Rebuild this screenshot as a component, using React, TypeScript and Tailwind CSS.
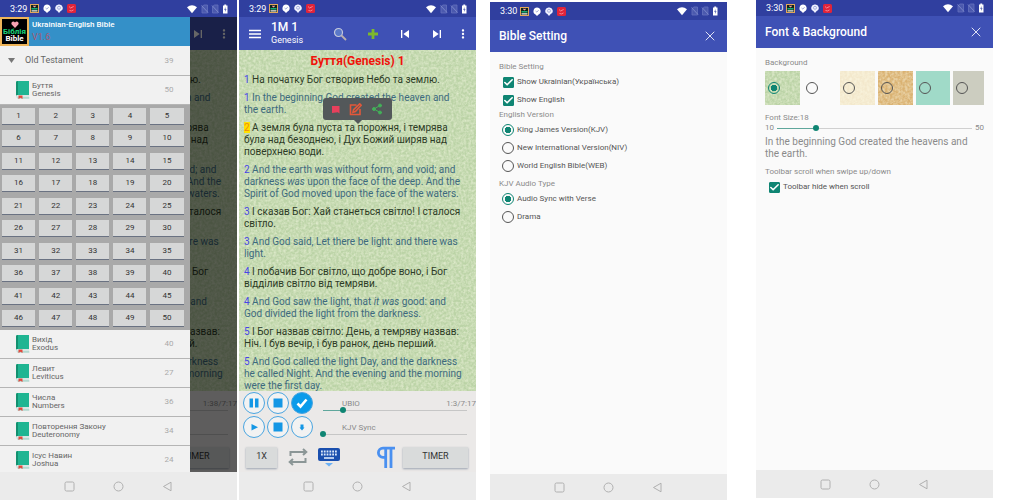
import React, { useId, useState } from 'react';
import { Share2, X, Check } from 'lucide-react';
import { MdSkipNext, MdSkipPrevious, MdMoreVert } from 'react-icons/md';

const VERSES = [
  { no: 1, uk: 'На початку Бог створив Небо та землю.', en: <>In the beginning God created the heaven and the earth.</> },
  {
    no: 2,
    uk: 'А земля була пуста та порожня, і темрява була над безоднею, і Дух Божий ширяв над поверхнею води.',
    en: <>And the earth was without form, and void; and darkness <i>was</i> upon the face of the deep. And the Spirit of God moved upon the face of the waters.</>,
  },
  { no: 3, uk: 'І сказав Бог: Хай станеться світло! І сталося світло.', en: <>And God said, Let there be light: and there was light.</> },
  {
    no: 4,
    uk: 'І побачив Бог світло, що добре воно, і Бог відділив світло від темряви.',
    en: <>And God saw the light, that <i>it was</i> good: and God divided the light from the darkness.</>,
  },
  {
    no: 5,
    uk: 'І Бог назвав світло: День, а темряву назвав: Ніч. І був вечір, і був ранок, день перший.',
    en: <>And God called the light Day, and the darkness he called Night. And the evening and the morning were the first day.</>,
  },
];

const BOOKS = [
  { uk: 'Вихід', en: 'Exodus', chapters: 40 },
  { uk: 'Левит', en: 'Leviticus', chapters: 27 },
  { uk: 'Числа', en: 'Numbers', chapters: 36 },
  { uk: 'Повторення Закону', en: 'Deuteronomy', chapters: 34 },
  { uk: 'Ісус Навин', en: 'Joshua', chapters: 24 },
];

const SWATCHES = [
  { name: 'Green paper', color: 'bg-[#bbd3a6]', grain: true },
  { name: 'White', color: 'bg-transparent', grain: false },
  { name: 'Cream paper', color: 'bg-[#f3e8cc]', grain: true },
  { name: 'Brown paper', color: 'bg-[#dab272]', grain: true },
  { name: 'Mint', color: 'bg-[#a0dac8]', grain: false },
  { name: 'Grey', color: 'bg-[#cccdc0]', grain: false },
];

// Paper grain laid over a flat colour
function Grain() {
  const id = useId();
  return (
    <svg className="absolute inset-0 h-full w-full" aria-hidden="true">
      <filter id={id}>
        <feTurbulence type="fractalNoise" baseFrequency="0.4" numOctaves="2" seed="4" />
        <feColorMatrix values="0 0 0 0 1  0 0 0 0 1  0 0 0 0 0.85  0.9 0 0 0 -0.27" />
      </filter>
      <rect width="100%" height="100%" filter={`url(#${id})`} />
    </svg>
  );
}

function StatusBar({ time, className }: { time: string; className: string }) {
  return (
    <div className={`flex shrink-0 items-center bg-[#303f9f] pr-[9px] pl-[10px] text-white ${className}`}>
      <span className="text-[9px] leading-3">{time}</span>
      <svg className="ml-[3px] h-[9px] w-[46px]" viewBox="0 0 46 9" aria-hidden="true">
        <rect width="9" height="9" fill="#e2a75a" />
        <rect x="1" y="1" width="7" height="7" fill="#10241c" />
        <path d="M4.5 3.6 3 2.2Q3.7 1 4.5 1.9 5.3 1 6 2.2Z" fill="#f6a0a8" />
        <path d="M1.5 4.8h6" stroke="#19c486" strokeWidth="1.3" />
        <path d="M1.5 6.9h6" stroke="#fff" strokeWidth="1.2" />
        <path d="M17 .5a3.700 3.700 0 0 1 1.600 7L17 9l-1.500-1.500A3.700 3.700 0 0 1 17 .5Z" fill="#fff" />
        <path d="m15.600 4 1.200 1.100 1.800-1.900" fill="none" stroke="#8590cc" strokeWidth=".8" />
        <path d="M29 .5a3.400 3.400 0 0 1 1.700 6.500L29 9l-1.700-2A3.400 3.400 0 0 1 29 .5Z" fill="#eef0ff" />
        <circle cx="29" cy="3.800" r="1.500" fill="none" stroke="#8d97d0" strokeWidth=".7" />
        <rect x="37" width="9" height="9" rx="1.500" fill="#e0243a" />
        <path d="M39 2.500 40.600 4 43.600 2.500M39.500 6.500q2 1.200 4-.6" fill="none" stroke="#ffa0aa" strokeWidth=".8" />
      </svg>
      <svg className="ml-auto h-[10px] w-[41px]" viewBox="0 0 41 10" aria-hidden="true">
        <path d="M0 3.300Q5 -.9 10 3.300L5 9.200Z" fill="#fff" />
        <path d="M15 2.500 17 1h3.500v8H15ZM25.500 2.500l2-1.500H31v8h-5.500Z" fill="#4b59ae" stroke="#6472be" strokeWidth=".8" />
        <path d="m14.500 1.500 6.500 7M25 1.500l6.500 7" stroke="#8590cf" strokeWidth=".8" />
        <path d="M36 1.500h1.300V.5h1.900v1h1.300v8H36Z" fill="#fff" />
        <path d="M38.700 3 37.200 5.700h1.200L38 8l1.500-2.800h-1.200Z" fill="#303f9f" />
      </svg>
    </div>
  );
}

function NavBar({ className }: { className: string }) {
  return (
    <nav className={`flex shrink-0 items-center justify-center gap-[38px] bg-[#ebebeb] ${className}`}>
      <button aria-label="Recent apps">
        <svg className="h-[11px] w-[11px]" viewBox="0 0 11 11" fill="none" stroke="#b0b0b0">
          <rect x="1" y="1" width="9" height="9" rx="1.500" />
        </svg>
      </button>
      <button aria-label="Home">
        <svg className="h-[11px] w-[11px]" viewBox="0 0 11 11" fill="none" stroke="#b0b0b0">
          <circle cx="5.500" cy="5.500" r="4.500" />
        </svg>
      </button>
      <button aria-label="Back">
        <svg className="h-[11px] w-[11px]" viewBox="0 0 11 11" fill="none" stroke="#b0b0b0" strokeLinejoin="round">
          <path d="M1.500 5.500 9 1.200v8.600Z" />
        </svg>
      </button>
    </nav>
  );
}

type SeekProps = { id: string; label?: string; min?: number; max?: number; start: number; track: string };

function Seek({ id, label, min = 0, max = 100, start, track }: SeekProps) {
  const [value, setValue] = useState(start);
  const pct = ((value - min) / (max - min)) * 100;
  return (
    <div className="relative flex h-[6px] min-w-0 flex-1 items-center">
      <div className={`absolute inset-x-[3px] h-px ${track}`}>
        <div className="h-px bg-[#5fa79c]" style={{ width: `${pct}%` }} />
      </div>
      <input
        id={id}
        type="range"
        aria-label={label}
        min={min}
        max={max}
        value={value}
        onChange={(e) => setValue(Number(e.target.value))}
        className="relative block h-[6px] w-full appearance-none bg-transparent [&::-webkit-slider-thumb]:h-[6px] [&::-webkit-slider-thumb]:w-[6px] [&::-webkit-slider-thumb]:appearance-none [&::-webkit-slider-thumb]:rounded-full [&::-webkit-slider-thumb]:bg-[#0f8573]"
      />
    </div>
  );
}

function RoundButton({ label, filled, children }: { label: string; filled?: boolean; children: React.ReactNode }) {
  return (
    <button
      aria-label={label}
      className={`flex h-[22px] w-[22px] items-center justify-center rounded-full border border-[#4aa5e0] ${filled ? 'bg-[#0a9bea]' : 'bg-[#f2f2f2]'}`}
    >
      <svg className="h-[14px] w-[14px]" viewBox="0 0 14 14" fill="#1497e5">
        {children}
      </svg>
    </button>
  );
}

function Player({ id, position, progress }: { id: string; position: string; progress: number }) {
  const rows = [
    { name: 'UBIO', value: progress, time: position },
    { name: 'KJV Sync', value: 0, time: '' },
  ];
  return (
    <div className="h-[81px] shrink-0 bg-[#ebe9e8] pt-px">
      {rows.map((row, i) => (
        <div key={row.name} className="flex h-6 items-start pl-1">
          <div className="flex gap-[2px]">
            {i === 0 ? (
              <RoundButton label="Pause">
                <path d="M2.500 2.500h3.500v9H2.500zM8 2.500h3.500v9H8z" />
              </RoundButton>
            ) : (
              <RoundButton label="Play">
                <path d="M4.500 4v6.500L11 7.200Z" />
              </RoundButton>
            )}
            <RoundButton label="Stop">
              <path d="M2.500 2.500h9v9h-9z" />
            </RoundButton>
            {i === 0 ? (
              <RoundButton label="Sync with text" filled>
                <path d="m2.500 7.500 3 3 6-7" fill="none" stroke="#fff" strokeWidth="2.600" />
              </RoundButton>
            ) : (
              <RoundButton label="Download">
                <path d="M5.500 4.500h3v3h1L7 10.500 4.500 7.500h1Z" />
              </RoundButton>
            )}
          </div>
          <div className="min-w-0 flex-1 pt-[6px] pl-[7px] text-[8px] leading-3 text-[#8a8a8a]">
            <div className="flex h-3 justify-between pl-[22px]">
              <label htmlFor={`${id}-${i}`}>{row.name}</label>
              <span>{row.time}</span>
            </div>
            <div className="-mt-[3px] flex pr-[6px]">
              <Seek id={`${id}-${i}`} start={row.value} track="bg-[#c6c6c6]" />
            </div>
          </div>
        </div>
      ))}
      <div className="flex items-center pt-[6px] pr-2 pl-[7px] text-[9px] text-[#333]">
        <button className="h-[21px] w-[31px] bg-[#d9dbdb] shadow-xs shadow-gray-400">1X</button>
        <button aria-label="Repeat" className="ml-[11px]">
          <svg className="h-[20px] w-[20px]" viewBox="0 0 20 20" fill="none" stroke="#8b9696" strokeWidth="2">
            <path d="M2.500 9V5H18M15 2l3.300 3L15 8M17.500 11v4H2M5 12l-3.300 3L5 18" />
          </svg>
        </button>
        <button aria-label="Keyboard" className="ml-[9px]">
          <svg className="h-[20px] w-[24px]" viewBox="0 0 24 20">
            <rect x="1" y="1" width="22" height="13" rx="2" fill="#1a4fae" />
            <path d="M4 4.500h16M4 7.500h16" stroke="#dce8fa" strokeWidth="1.800" strokeDasharray="1.800 1" />
            <path d="M7 11h10" stroke="#dce8fa" strokeWidth="1.600" />
            <path d="M8 16h8l-4 3.500Z" fill="#6bb0f5" />
          </svg>
        </button>
        <button aria-label="Paragraph mode" className="ml-auto">
          <svg className="h-[22px] w-[20px]" viewBox="0 0 20 22" fill="none" stroke="#4a90f0" strokeWidth="2.800">
            <path d="M19 2.200H7a4.600 4.600 0 0 0 0 9.200H9.500M9.700 2v20M15 2v20" />
          </svg>
        </button>
        <button className="ml-[7px] h-[21px] w-[65px] bg-[#d9dbdb] shadow-xs shadow-gray-400">TIMER</button>
      </div>
    </div>
  );
}

function Reader({ id, position, progress, popup }: { id: string; position: string; progress: number; popup?: boolean }) {
  return (
    <div className="flex min-h-0 flex-1 flex-col">
      <header className="flex h-[33px] shrink-0 items-center bg-[#3f51b5] pr-[6px] pl-[10px] text-white">
        <button aria-label="Menu">
          <svg className="h-[10px] w-[12px]" viewBox="0 0 12 10" stroke="#fff" strokeWidth="1.600">
            <path d="M0 1.500h12M0 5h12M0 8.500h12" />
          </svg>
        </button>
        <div className="ml-[10px] flex-1">
          <h1 className="text-[12px] leading-[14px] font-medium">1M 1</h1>
          <p className="text-[9px] leading-[13px]">Genesis</p>
        </div>
        <div className="flex items-center">
          <button aria-label="Search" className="mr-[20px]">
            <svg className="h-[14px] w-[14px]" viewBox="0 0 14 14" fill="none">
              <circle cx="5.500" cy="5.500" r="4" fill="#5a78c8" stroke="#c5c9dc" strokeWidth="1.200" />
              <path d="m8.500 8.500 4.500 4.500" stroke="#b9b0ae" strokeWidth="1.800" />
            </svg>
          </button>
          <button aria-label="Add" className="mr-[18px]">
            <svg className="h-[12px] w-[12px]" viewBox="0 0 12 12" stroke="#7db82c" strokeWidth="2.800">
              <path d="M6 1v10M1 6h10" />
            </svg>
          </button>
          <button aria-label="Previous chapter" className="mr-[16px]"><MdSkipPrevious className="h-4 w-4" /></button>
          <button aria-label="Next chapter" className="mr-[11px]"><MdSkipNext className="h-4 w-4" /></button>
          <button aria-label="More"><MdMoreVert className="h-[14px] w-[14px]" /></button>
        </div>
      </header>
      <main className="relative min-h-0 flex-1 overflow-hidden bg-[#bbd3a6]">
        <Grain />
        <div className="relative pt-1 text-[10px] leading-3 text-[#2d3b26]">
          <h2 className="mb-[6px] text-center text-[12px] leading-[14px] font-bold text-[#f0130b]">Буття(Genesis) 1</h2>
          <div className="flex flex-col gap-[6px] pr-[12px] pl-[5px]">
            {VERSES.map((v) => (
              <React.Fragment key={v.no}>
                <p>
                  <span className={v.no === 2 ? 'bg-[#ffe100] text-[#f08a10]' : 'text-[#4646e6]'}>{v.no}</span> {v.uk}
                </p>
                <p className="text-[#3d6a7e]">
                  <span className="text-[#4646e6]">{v.no}</span> {v.en}
                </p>
              </React.Fragment>
            ))}
          </div>
        </div>
        {popup && (
          <div className="absolute top-[48px] left-[84px] flex h-[22px] w-[69px] items-center justify-around rounded-[3px] bg-[#53585a] px-1">
            <button aria-label="Bookmark">
              <svg className="h-[9px] w-[8px]" viewBox="0 0 8 9" fill="#e8405c"><path d="M0 1h7.500v7.500L5.800 7.300 0 8Z" /></svg>
            </button>
            <button aria-label="Note">
              <svg className="h-[13px] w-[13px]" viewBox="0 0 13 13" fill="none" stroke="#e2583a" strokeWidth="1.600">
                <path d="M7.500 2H1.500v9.500h9.500V6M4 9.300l.6-2.600L10.700.8l1.500 1.500-5.800 6.200Z" />
              </svg>
            </button>
            <button aria-label="Share"><Share2 className="h-[12px] w-[12px] fill-[#43b058] text-[#43b058]" /></button>
            <svg className="absolute top-full left-[31px] h-1 w-2" viewBox="0 0 8 4"><path d="M0 0h8L4 4Z" fill="#53585a" /></svg>
          </div>
        )}
      </main>
      <Player id={id} position={position} progress={progress} />
    </div>
  );
}

function BookRow({ uk, en, chapters }: { uk: string; en: string; chapters: number }) {
  return (
    <button className="flex h-[29px] w-full shrink-0 items-center border-b border-[#b5b5b5] pr-[16px] pl-[15px] text-left text-[8px] leading-[8px] text-[#666]">
      <svg className="mr-[2px] h-[18px] w-[15px]" viewBox="0 0 15 18" aria-hidden="true">
        <path d="M2 0h12v14H2Q1 14 1 16V2Q1 0 2 0Z" fill="#1fb592" />
        <path d="M1 1.500Q1 0 3 0v14Q1 14 1 15.500Z" fill="#13906f" />
        <path d="M2 14h12v3H2.500Q1 17 1 15.500 1 14 2 14Z" fill="#d7e6e4" />
        <path d="M14.300 17H2.500" stroke="#7cc4b4" strokeWidth=".8" />
        <path d="M3.500 14.500h4V18l-2-1.200-2 1.200Z" fill="#e2493d" />
      </svg>
      <span className="flex-1">
        <span className="block">{uk}</span>
        <span className="block">{en}</span>
      </span>
      <span className="text-[#aaa]">{chapters}</span>
    </button>
  );
}

function Drawer() {
  const chapters = Array.from({ length: 50 }, (_, i) => i + 1);
  return (
    <aside className="absolute inset-y-0 left-0 flex w-4/5 flex-col overflow-hidden bg-[#f1f1f1]">
      <div className="flex h-[29px] shrink-0 bg-[#3490c8]">
        <div className="flex w-[29px] flex-col items-center justify-center border-2 border-[#efb55a] bg-black text-[8px] leading-[7px] font-bold">
          <svg className="h-[7px] w-[8px]" viewBox="0 0 8 7" aria-hidden="true">
            <path d="M4 7 .7 3.500C-.6 1.500 2.400-.8 4 1.500 5.600-.8 8.600 1.500 7.300 3.500Z" fill="#f9a3b4" />
          </svg>
          <span className="text-[#19d27a]">Біблія</span>
          <span className="text-white">Bible</span>
        </div>
        <div className="pl-[3px] text-[8px] leading-3">
          <p className="pt-[2px] font-medium text-white">Ukrainian-English Bible</p>
          <p className="text-[9px] text-[#a85a70]">V1.6</p>
        </div>
      </div>
      <button className="flex h-[30px] w-full shrink-0 items-center border-b border-[#b5b5b5] pr-[16px] pl-2 text-left text-[#666]">
        <svg className="h-[5px] w-[7px]" viewBox="0 0 7 5" aria-hidden="true"><path d="M0 0h7L3.500 5Z" fill="#777" /></svg>
        <span className="ml-[10px] flex-1 text-[9px]">Old Testament</span>
        <span className="text-[8px] text-[#aaa]">39</span>
      </button>
      <BookRow uk="Буття" en="Genesis" chapters={50} />
      <div className="grid h-[225px] shrink-0 grid-cols-5 content-between gap-x-1 bg-[#a9a9a9] pt-[3px] pr-[6px] pb-1 pl-[2px]">
        {chapters.map((c) => (
          <button key={c} className="h-4 bg-[#d6d7d7] text-[8px] leading-4 text-[#333] shadow-2xs shadow-gray-500">{c}</button>
        ))}
      </div>
      {BOOKS.map((b) => (
        <BookRow key={b.en} {...b} />
      ))}
    </aside>
  );
}

function PageHeader({ title }: { title: string }) {
  return (
    <header className="flex h-[32px] shrink-0 items-center justify-between bg-[#3f51b5] pr-[9px] pl-[9px] text-white">
      <h1 className="text-[12px] leading-4 font-medium">{title}</h1>
      <button aria-label="Close"><X className="h-4 w-4 text-[#dfe2f4]" strokeWidth={1.5} /></button>
    </header>
  );
}

function CheckRow({ label }: { label: string }) {
  return (
    <label className="flex h-[18px] items-center gap-[3px] pl-1 text-[8px] text-[#555]">
      <span className="relative flex h-[11px] w-[11px]">
        <input type="checkbox" defaultChecked className="peer h-[11px] w-[11px] appearance-none rounded-[1px] border border-[#666] checked:border-[#0f8573] checked:bg-[#0f8573]" />
        <Check className="pointer-events-none absolute inset-0 hidden h-[11px] w-[11px] text-white peer-checked:block" strokeWidth={3.5} />
      </span>
      {label}
    </label>
  );
}

const RADIO =
  'block h-[12px] w-[12px] shrink-0 appearance-none rounded-full border border-[#555] checked:border-[#0f8573] checked:bg-[radial-gradient(circle,#0f8573_0_3px,transparent_3px)]';

function RadioRow({ name, label, checked }: { name: string; label: string; checked?: boolean }) {
  return (
    <label className="flex h-[18px] items-center gap-[3px] pl-[3px] text-[8px] text-[#555]">
      <input type="radio" name={name} defaultChecked={checked} className={RADIO} />
      {label}
    </label>
  );
}

function BibleSetting() {
  return (
    <main className="flex-1 bg-[#fafafa] px-[9px] pt-[9px] text-[8px] leading-3 text-[#8a8a8a]">
      <h2>Bible Setting</h2>
      <CheckRow label="Show Ukrainian(Українська)" />
      <CheckRow label="Show English" />
      <h2>English Version</h2>
      <RadioRow name="version" label="King James Version(KJV)" checked />
      <RadioRow name="version" label="New International Version(NIV)" />
      <RadioRow name="version" label="World English Bible(WEB)" />
      <h2 className="mt-[3px]">KJV Audio Type</h2>
      <RadioRow name="audio" label="Audio Sync with Verse" checked />
      <RadioRow name="audio" label="Drama" />
    </main>
  );
}

function FontBackground() {
  return (
    <main className="flex-1 bg-[#fafafa] px-[9px] pt-[9px] text-[8px] leading-3 text-[#8a8a8a]">
      <h2>Background</h2>
      <div className="mt-[2px] grid h-[34px] grid-cols-[repeat(5,35fr)_31fr] gap-[3px]">
        {SWATCHES.map((s, i) => (
          <label key={s.name} className={`relative flex items-center pl-[3px] ${s.color}`}>
            {s.grain && <Grain />}
            <input type="radio" name="background" aria-label={s.name} defaultChecked={i === 0} className={`relative ${RADIO}`} />
          </label>
        ))}
      </div>
      <label htmlFor="font-size" className="mt-[7px] block h-[10px]">Font Size:18</label>
      <div className="flex items-center">
        <span>10</span>
        <Seek id="font-size" min={10} max={50} start={18} track="bg-[#d0d0d0]" />
        <span>50</span>
      </div>
      <p className="pt-[2px] text-[10px] leading-3">In the beginning God created the heavens and the earth.</p>
      <h2 className="mt-[6px]">Toolbar scroll when swipe up/down</h2>
      <CheckRow label="Toolbar hide when scroll" />
    </main>
  );
}

export default function App() {
  return (
    <div className="flex h-screen bg-white pr-[31px] font-[Roboto,sans-serif]">
      <section className="flex min-w-0 flex-1 flex-col overflow-hidden">
        <StatusBar time="3:29" className="h-[17px]" />
        <div className="relative flex min-h-0 flex-1 flex-col">
          <Reader id="drawer-seek" position="1:38/7:17" progress={22} />
          <div className="absolute inset-0 bg-black/60" />
          <Drawer />
        </div>
        <NavBar className="h-7" />
      </section>

      <section className="ml-[2px] flex min-w-0 flex-1 flex-col overflow-hidden">
        <StatusBar time="3:29" className="h-[17px]" />
        <Reader id="reader-seek" position="1:3/7:17" progress={14} popup />
        <NavBar className="h-7" />
      </section>

      <section className="mt-[2px] ml-[14px] flex min-w-0 flex-1 flex-col overflow-hidden">
        <StatusBar time="3:30" className="h-[18px]" />
        <PageHeader title="Bible Setting" />
        <BibleSetting />
        <NavBar className="h-[26px]" />
      </section>

      <section className="mb-[2px] ml-[29px] flex min-w-0 flex-1 flex-col overflow-hidden">
        <StatusBar time="3:30" className="h-4" />
        <PageHeader title="Font & Background" />
        <FontBackground />
        <NavBar className="h-7" />
      </section>
    </div>
  );
}
